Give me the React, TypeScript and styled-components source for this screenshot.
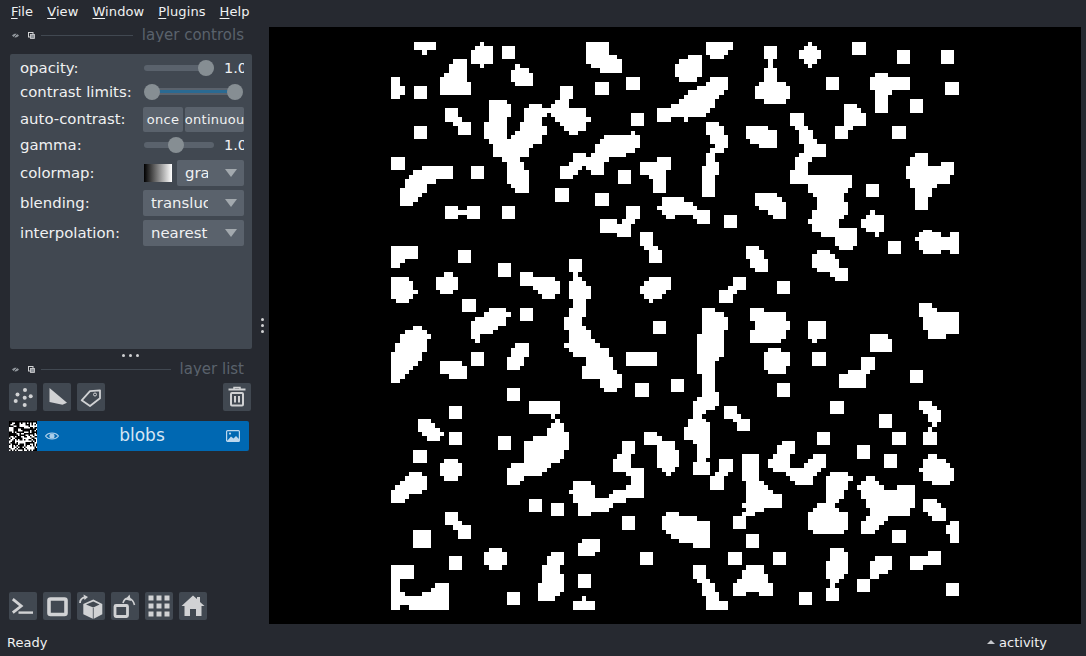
import React from "react";
import styled, { createGlobalStyle } from "styled-components";

const Global = createGlobalStyle`
  html, body { margin: 0; padding: 0; background: #262930; }
  body { font-family: "DejaVu Sans", sans-serif; color: #f0f1f2; }
`;

const Window = styled.div`
  width: 1086px; height: 656px; display: flex; flex-direction: column; overflow: hidden; background: #262930;
`;
const MenuBar = styled.nav`
  height: 27px; flex: none; display: flex; padding-left: 11px; gap: 14px; align-items: flex-start;
`;
const MenuItem = styled.span`
  font-size: 13px; line-height: 23px; color: #f0f1f2; letter-spacing: 0.1px;
  u { text-underline-offset: 2px; text-decoration-thickness: 1px; }
`;
const Main = styled.div`
  flex: none; height: 597px; display: flex;
`;
const Sidebar = styled.aside`
  width: 269px; flex: none; display: flex;
`;
const DockColumn = styled.div`
  width: 254px; flex: none; display: flex; flex-direction: column;
`;
const SplitColumn = styled.div`
  width: 15px; flex: none; display: flex; flex-direction: column; align-items: center; justify-content: center; gap: 3px; padding-left: 2px; box-sizing: border-box; padding-top: 0;
`;
const Dot = styled.i`
  display: block; width: 3px; height: 3px; border-radius: 50%; background: #d1d2d4;
`;
const TitleBar = styled.div<{ $top: number; $bottom: number }>`
  height: 14px; flex: none; display: flex; align-items: center; margin: ${p => p.$top}px 10px ${p => p.$bottom}px 12px;
`;
const TitleIcons = styled.div`
  display: flex; gap: 9px; align-items: center; margin-right: 6px;
`;
const TitleLine = styled.div`
  flex: 1; height: 1px; background: #414851; margin-right: 9px;
`;
const TitleText = styled.div`
  font-size: 15px; line-height: 14px; height: 14px; overflow: hidden; color: #5a626c; white-space: nowrap;
`;
const Panel = styled.section`
  height: 295px; flex: none; margin: 0 2px 0 10px; padding: 4px 0 0 10px; box-sizing: border-box; background: #414851; border-radius: 2px;
`;
const Row = styled.div<{ $h: number }>`
  height: ${p => p.$h}px; display: flex; align-items: center;
`;
const Label = styled.label`
  width: 123px; flex: none; font-size: 14.9px; color: #f0f1f2; white-space: nowrap;
`;
const Control = styled.div`
  width: 101px; flex: none; display: flex; align-items: center; overflow: hidden;
`;
const Slider = styled.div<{ $w: number }>`
  position: relative; margin-left: 1px; width: ${p => p.$w}px; height: 16px; flex: none;
`;
const Track = styled.div`
  position: absolute; left: 0; right: 0; top: 5px; height: 6px; border-radius: 3px; background: #5a626c;
`;
const RangeTrack = styled.div`
  position: absolute; left: 8px; right: 8px; top: 4px; height: 7px; background: #5a626c;
  &::after { content: ""; position: absolute; left: 0; right: 0; top: 2px; height: 3px; background: #2b6a92; }
`;
const Knob = styled.div`
  position: absolute; top: 0; width: 16px; height: 16px; border-radius: 50%; background: #868e93;
`;
const Value = styled.span`
  margin-left: 10px; font-size: 14.5px; color: #f0f1f2; white-space: nowrap; width: 20px; overflow: hidden; flex: none;
`;
const SmallButton = styled.div<{ $w: number; $m: number }>`
  width: ${p => p.$w}px; height: 25px; flex: none; margin-right: ${p => p.$m}px; background: #5a626c; border-radius: 2px;
  display: flex; justify-content: center; align-items: center; overflow: hidden; font-size: 13px; letter-spacing: 0.02em; color: #f0f1f2; white-space: nowrap;
`;
const Swatch = styled.div`
  width: 28px; height: 18px; margin: 0 5px 0 1px; flex: none; background: linear-gradient(90deg, #000, #fff);
`;
const Combo = styled.div<{ $w: number }>`
  width: ${p => p.$w}px; height: 26px; flex: none; background: #5a626c; border-radius: 2px; display: flex; align-items: center; position: relative;
  padding-left: 8px; box-sizing: border-box;
`;
const ComboText = styled.span<{ $w: number }>`
  width: ${p => p.$w}px; overflow: hidden; white-space: nowrap; font-size: 14.9px; color: #f0f1f2;
`;
const Arrow = styled.span`
  position: absolute; right: 7px; top: 9px; width: 0; height: 0;
  border-left: 6px solid transparent; border-right: 6px solid transparent; border-top: 8px solid #a3a9ae;
`;
const Handle = styled.div`
  height: 13px; flex: none; display: flex; justify-content: center; align-items: center; gap: 4px; padding-left: 6px; padding-top: 0;
`;
const ButtonRow = styled.div<{ $top: number }>`
  display: flex; gap: 6px; flex: none; margin: ${p => p.$top}px 3px 0 9px;
`;
const IconButton = styled.button<{ $push?: boolean }>`
  width: 28px; height: 28px; flex: none; padding: 0; border: 0; border-radius: 2px; background: #414851; color: #d1d2d4;
  margin-left: ${p => (p.$push ? "auto" : 0)};
  svg { display: block; }
`;
const LayerRow = styled.div`
  height: 30px; flex: none; margin: 10px 5px 0 9px; display: flex;
`;
const Thumb = styled.svg`
  width: 28px; height: 30px; flex: none; display: block; background: #000;
`;
const LayerBar = styled.div`
  flex: 1; display: flex; align-items: center; background: #0068b2; border-radius: 0 2px 2px 0; position: relative; padding: 0 9px 0 8px;
`;
const LayerName = styled.span`
  flex: 1; text-align: center; font-size: 17px; line-height: 20px; color: #d7e6f2; margin: 0 1px 3px 0;
`;
const BottomRow = styled(ButtonRow)`
  margin-top: auto; margin-bottom: 4px;
`;
const Viewer = styled.main`
  flex: none; width: 812px; height: 597px; background: #000;
`;
const Canvas = styled.svg`
  display: block; width: 812px; height: 597px;
`;
const StatusBar = styled.footer`
  flex: 1; display: flex; align-items: center; justify-content: space-between; padding: 5px 39px 0 7px; font-size: 13px; color: #f0f1f2;
`;
const Activity = styled.div`
  display: flex; align-items: center; gap: 4px;
`;
const Caret = styled.span`
  width: 0; height: 0; border-left: 4px solid transparent; border-right: 4px solid transparent; border-bottom: 4px solid #c5c8cc; margin-top: -1px;
`;

const r = (a: number, b: number, c: number, d: number) => `M${a} ${b}H${c}V${d}H${a}Z`;

const groups: { x: number; y: number; d: string[] }[] = [
  { x: 385, y: 35, d: [
    "M87 20H153V46H125V60H111V46H87Z",
    "M285 20H298V33H325V86H298V100H285V86H258V46H271V33H285Z",
    r(351,33,391,73),
    "M205 73H245V140H258V180H165V126H178V113H191V86H205Z",
    "M18 126H45V153H60V180H45V193H18Z",
    r(87,153,125,193),
    "M391 86H404V100H431V113H444V153H391V140H378V106H391Z",
    "M604 20H671V60H697V73H711V113H644V100H618V86H604Z",
    r(724,126,764,166), r(631,140,671,180), r(738,233,777,273), r(87,273,125,313),
    "M180 220H218V246H231V260H258V300H218V273H205V260H180Z",
    "M311 195H365V207H378V246H365V313H378V300H391V287H404V260H418V220H431V207H471V220H498V207H511V195H525V153H564V193H551V220H604V246H618V260H604V287H578V300H551V287H538V273H524V260H511V246H498V233H485V246H471V273H485V300H471V327H444V340H431V366H404V380H418V406H431V473H391V460H378V446H365V380H351V366H325V327H311V313H298V260H311Z",
    "M658 300H738V287H751V300H765V340H751V353H724V366H671V380H658V420H618V406H604V393H591V406H578V420H564V433H525V393H551V380H564V353H604V366H618V353H631V327H644V313H658Z",
    "M817 220H857V206H871V246H857V260H817Z",
    "M817 366H857V406H844V473H804V433H791V420H765V380H817Z",
    r(18,366,60,406),
    "M111 393H205V433H153V446H125V473H111V486H98V500H85V513H45V460H60V433H71V420H85V406H111Z",
    r(258,393,298,433), r(698,406,738,446), r(511,460,551,500), r(631,473,671,513),
    "M180 513H218V526H245V513H285V553H245V540H218V553H180Z",
    r(351,513,391,553),
    "M831 486H871V553H844V540H831V526H817V513H831Z",
    "M724 513H765V553H751V566H738V605H697V593H644V553H697V566H711V553H724Z",
  ]},
  { x: 675, y: 35, d: [
    "M93 20H173V46H160V60H146V73H106V60H93Z",
    "M40 60H80V126H66V140H13V126H0V86H13V73H40Z",
    r(266,33,306,73),
    "M280 73H293V100H306V140H333V153H346V193H333V206H266V193H240V153H253V140H266V100H280Z",
    "M399 20H412V33H426V46H439V73H426V86H412V100H399V86H386V73H373V46H386V33H399Z",
    r(532,20,573,60), r(666,46,705,86), r(798,46,838,86), r(452,126,492,166),
    "M106 126H159V166H146V180H133V193H120V220H106V233H93V246H40V260H27V246H0V206H13V193H27V180H40V166H66V153H93V140H106Z",
    "M599 113H639V126H705V166H652V180H639V233H599V166H586V126H599Z",
    r(810,140,852,180), r(705,193,745,233),
    "M506 206H546V220H559V233H573V273H533V286H519V313H479V273H506Z",
    r(652,273,692,313),
    "M346 233H386V273H399V286H413V313H426V327H453V366H412V380H399V420H532V460H519V473H506V500H519V540H506V553H492V580H546V632H533V645H493V632H480V605H439V592H412V566H399V553H412V526H426V486H413V473H399V446H346V406H359V366H373V353H386V327H373V286H359V273H346Z",
    "M93 260H133V273H146V300H160V340H146V353H120V380H133V420H120V486H80V393H93V353H106V340H120V327H106V300H93Z",
    "M213 273H280V286H306V340H253V327H226V313H213Z",
    r(146,540,186,580),
    "M0 486H27V500H53V513H66V526H106V566H66V553H53V540H0Z",
    "M240 473H306V486H320V500H333V553H293V540H280V526H253V513H240Z",
    "M719 353H759V393H799V380H838V420H825V446H785V460H772V486H759V526H719V460H705V433H692V393H705V366H719Z",
    r(573,446,612,486),
    "M586 526H599V540H626V592H612V605H599V592H573V580H559V553H573V540H586Z",
  ]},
  { x: 385, y: 230, d: [
    "M18 47H98V87H60V100H45V113H18Z",
    r(219,60,258,100), r(338,100,378,140),
    "M405 127H444V140H511V153H525V193H511V207H471V193H458V180H444V167H405Z",
    "M551 87H591V127H578V140H591V153H604V167H618V207H604V260H591V287H604V300H618V327H631V340H644V353H671V380H684V420H697V433H711V473H697V487H658V473H644V447H591V407H604V380H564V367H551V353H538V340H551V300H538V260H551V233H564V207H551V153H564V127H551Z",
    "M765 7H804V47H818V60H831V100H791V60H778V47H765Z",
    "M791 140H857V180H844V193H831V207H804V220H791V207H778V193H765V167H778V153H791Z",
    "M165 140H178V127H205V140H218V180H205V193H165V180H153V140Z",
    "M18 140H71V153H85V180H98V193H85V207H71V220H33V207H18Z",
    r(231,207,273,247),
    "M311 233H364V247H378V260H364V287H338V300H325V313H285V340H271V327H258V273H271V260H298V247H311Z",
    r(405,233,444,273), r(804,273,844,313),
    "M85 287H111V300H125V313H138V327H125V367H111V393H98V407H85V420H71V433H60V447H45V460H18V367H31V340H45V313H60V300H85Z",
    "M391 340H431V380H418V407H404V420H365V380H378V353H391Z",
    r(258,367,298,407),
    "M165 393H231V407H245V447H191V433H165Z",
    r(724,367,817,407), r(365,473,405,513), r(751,460,791,500), r(858,447,898,487),
    r(191,527,231,567),
    "M431 513H525V553H511V567H498V553H431Z",
  ]},
  { x: 675, y: 230, d: [
    "M213 47H253V60H266V87H280V127H240V113H226V87H213Z",
    "M426 60H466V73H479V87H493V113H519V153H479V140H466V127H426V113H412V73H426Z",
    r(639,33,679,73),
    "M745 0H772V7H799V20H825V7H852V73H825V60H799V73H745V60H732V33H719V20H732V7H745Z",
    "M173 140H213V180H186V193H173V220H133V180H160V167H173Z",
    r(306,153,346,193),
    "M80 233H120V247H146V260H160V300H146V380H133V393H120V487H133V527H120V540H93V553H80V567H93V577H106V684H93V697H106V736H53V697H66V643H53V630H27V590H40V567H53V513H66V500H80V433H66V313H80Z",
    "M225 233H266V247H333V273H346V300H333V327H319V340H225V300H240V273H225Z",
    "M732 220H772V233H785V247H852V313H812V327H759V300H745V260H732Z",
    "M399 273H453V327H426V340H412V327H399Z",
    "M586 313H639V327H652V367H586Z",
    "M280 353H319V367H346V407H333V433H280V420H266V367H280Z",
    r(412,367,453,407),
    "M559 380H599V420H586V433H573V473H493V433H519V420H559Z",
    r(705,420,745,460), r(306,460,346,500), r(466,513,506,553),
    "M732 513H772V527H785V540H799V577H785V590H772V577H759V553H745V540H732Z",
    "M146 527H186V553H199V567H226V603H186V577H173V567H146Z",
    r(612,553,652,593),
  ]},
  { x: 385, y: 420, d: [
    "M98 -4H138V9H151V23H165V36H178V49H165V63H125V49H111V36H98Z",
    r(191,36,231,76), r(338,49,378,89),
    "M511 -4H525V9H538V36H551V89H538V116H525V129H498V143H485V156H471V169H418V183H404V196H365V143H378V129H418V63H444V49H485V23H498V9H511Z",
    r(85,89,125,129),
    "M178 116H218V129H231V169H218V183H178V169H165V129H178Z",
    "M71 156H111V169H125V209H111V223H71V236H60V249H18V209H31V196H45V183H60V169H71Z",
    "M711 63H751V103H738V143H778V233H724V249H684V263H671V276H618V289H578V249H564V223H551V209H564V183H618V196H631V233H671V223H684V209H724V196H738V169H724V156H684V116H697V103H711Z",
    r(431,236,471,276), r(498,249,538,289), r(711,289,751,329),
    "M180 276H218V303H231V316H258V356H218V329H205V316H180Z",
    r(85,329,138,383),
    "M311 383H351V396H365V436H351V449H311V436H298V396H311Z",
    "M591 356H644V396H631V409H578V369H591Z",
    r(191,409,231,449), r(765,396,804,436),
    "M498 396H538V436H525V463H538V516H525V529H511V543H458V489H471V436H485V409H498Z",
    r(578,463,618,503),
    "M18 436H87V476H45V516H60V529H111V516H138V503H151V489H191V569H71V556H45V569H18Z",
    r(365,516,405,556),
    "M591 529H604V543H631V569H564V543H591Z",
    "M778 36H817V49H831V63H870V89H883V140H870V156H857V169H844V156H831V143H817V76H778Z",
    "M844 276H871V356H857V343H844V329H831V289H844Z",
  ]},
  { x: 675, y: 420, d: [
    r(426,36,466,76), r(652,36,692,76),
    r(745,36,785,76), r(759,20,772,36), r(759,0,799,7), r(772,7,785,20),
    r(546,76,586,116), r(626,103,666,143),
    "M759 103H785V116H812V129H825V143H838V183H825V196H772V183H745V156H732V143H745V116H759Z",
    "M320 63H359V103H346V143H386V129H399V116H413V103H453V143H439V156H426V169H413V196H359V183H346V169H333V156H293V143H280V116H293V103H306V76H320Z",
    "M133 116H173V156H160V169H146V209H106V169H120V156H133Z",
    "M200 103H253V183H266V196H280V209H293V223H320V263H266V276H240V289H213V327H173V289H200V276H213V263H200V249H213V183H200Z",
    "M466 156H519V169H533V183H519V209H506V236H493V249H479V263H493V276H519V329H506V343H413V329H399V276H413V263H426V249H453V169H466Z",
    "M573 169H599V183H612V196H626V209H666V196H719V263H705V289H639V303H626V316H612V329H599V343H559V303H573V289H586V263H573V236H559V209H546V196H559V183H573Z",
    r(213,343,253,383),
    "M745 236H785V249H799V263H812V303H772V289H759V276H745Z",
    "M839 303H852V369H825V343H812V316H825V303Z",
    r(652,329,692,369), r(160,396,200,436), r(293,396,333,436),
    "M466 383H506V396H519V463H506V476H493V489H479V503H493V543H453V503H466V476H453V423H466Z",
    "M599 409H652V449H639V463H612V476H586V423H599Z",
    r(546,476,586,516),
    "M759 393H799V436H745V449H705V409H759Z",
    r(812,489,852,529), r(372,516,412,556),
    "M0 276H13V289H66V303H106V383H53V369H13V356H0Z",
    "M53 436H93V476H106V489H120V516H133V543H160V569H93V529H80V489H66V476H53Z",
    "M213 436H266V463H280V489H293V529H253V516H213V529H173V489H186V476H200V449H213Z",
  ]},
];

const thumbCells = (() => {
  const out: string[] = [];
  let s = 12345;
  for (let y = 1.5; y < 29; y += 1.5) {
    for (let x = 0; x < 27.5; x += 1.5) {
      s = (s * 1103515245 + 12345) & 0x7fffffff;
      if ((s >> 16) % 100 < 50) out.push(`M${x} ${y}h1.5v1.5h-1.5z`);
    }
  }
  return out.join("");
})();

const Svg = ({ children, w = 28, h = 28 }: { children: React.ReactNode; w?: number; h?: number }) => (
  <svg width={w} height={h} viewBox={`0 0 ${w} ${h}`} fill="none">{children}</svg>
);
const C = "#d1d2d4";

const PointsIcon = () => (
  <Svg>
    {[[16, 7], [21.7, 13.3], [8.5, 11.5], [6.7, 18], [15.7, 14.7], [15.7, 22]].map(([x, y], i) => (
      <circle key={i} cx={x} cy={y} r={2} fill={C} />
    ))}
  </Svg>
);
const ShapesIcon = () => (
  <Svg><path d="M6.5 5L24 19.7L19.5 21.8L6.5 19Z" fill={C} /></Svg>
);
const LabelsIcon = () => (
  <Svg>
    <path d="M4.7 17.3L13 8.2L23 7.3V15.3L13 23Z" stroke={C} strokeWidth={1.8} strokeLinejoin="round" />
    <circle cx={18} cy={11.5} r={1.5} stroke={C} strokeWidth={1} />
  </Svg>
);
const TrashIcon = () => (
  <Svg>
    <path d="M5.5 6.5H22.5" stroke={C} strokeWidth={2} />
    <path d="M11 6V4.5H17V6" stroke={C} strokeWidth={1.5} />
    <rect x={8} y={10} width={12} height={12.5} rx={1} stroke={C} strokeWidth={2} />
    <path d="M12 13V19.5M16 13V19.5" stroke={C} strokeWidth={2} />
  </Svg>
);
const ConsoleIcon = () => (
  <Svg>
    <path d="M3.8 7.2L12.2 14L3.8 20.6" stroke={C} strokeWidth={2.8} />
    <path d="M9.5 20.6H24" stroke={C} strokeWidth={2.4} />
  </Svg>
);
const SquareIcon = () => (
  <Svg><rect x={6} y={7} width={17} height={15.5} rx={1.5} stroke={C} strokeWidth={3.6} /></Svg>
);
const CubeIcon = () => (
  <Svg>
    <path d="M16.3 7.5L25.3 12V22.3L16.3 27L6.3 22.3V12Z" fill={C} />
    <path d="M16.3 9.6L22.6 12.5L16.3 15.6L9 12.5Z" fill="#414851" />
    <path d="M16.3 16V27" stroke="#414851" strokeWidth={0.8} />
    <path d="M3 11C3 8 5 6 8 5.2" stroke={C} strokeWidth={1.8} />
    <path d="M6.5 2.5L11 5L7.5 8Z" fill={C} />
  </Svg>
);
const RollIcon = () => (
  <Svg>
    <rect x={4} y={13.5} width={12.5} height={11} rx={1} stroke={C} strokeWidth={2.8} />
    <path d="M12 11C13 7.5 15 6 18 6.5C20.5 7 22.5 9 23.5 13" stroke={C} strokeWidth={1.6} />
    <path d="M18.5 2.5L20 9L14.5 7.5Z" fill={C} />
  </Svg>
);
const GridIcon = () => (
  <Svg>
    {[3.5, 11.5, 19.5].flatMap(y => [3.5, 11.5, 19.5].map(x => <rect key={`${x}-${y}`} x={x} y={y} width={5} height={5} fill={C} />))}
  </Svg>
);
const HomeIcon = () => (
  <Svg><path d="M14 3.5L18 7V5H21V10L25.5 14H22.5V24H17V17H11V24H5.5V14H2.5Z" fill={C} /></Svg>
);
const MiniEye = () => (
  <Svg w={7} h={7}>
    <path d="M0 3.5C2 1 5 1 7 3.5C5 6 2 6 0 3.5Z" fill="#8f949a" />
    <path d="M1 6L6 1" stroke="#262930" strokeWidth={0.8} />
  </Svg>
);
const MiniFloat = () => (
  <Svg w={7} h={7}>
    <rect x={0.5} y={0.5} width={4.5} height={4.5} stroke={C} strokeWidth={1} />
    <rect x={2.5} y={2.5} width={4} height={4} fill="#8f949a" stroke={C} strokeWidth={0.8} />
  </Svg>
);
const EyeIcon = () => (
  <Svg w={14} h={10}>
    <path d="M0.5 5C3.5 1 10.5 1 13.5 5C10.5 9 3.5 9 0.5 5Z" stroke="#a9cde9" strokeWidth={1.2} />
    <circle cx={7} cy={5} r={2.6} fill="#a9cde9" />
  </Svg>
);
const ImageIcon = () => (
  <Svg w={14} h={12}>
    <rect x={0.6} y={0.6} width={12.8} height={10.8} rx={1} stroke="#bcd7ed" strokeWidth={1.2} />
    <path d="M1 11L5 6.5L7.5 8.5L10 6L13 9V11.5H1Z" fill="#bcd7ed" />
    <circle cx={4} cy={3.6} r={1.1} fill="#bcd7ed" />
  </Svg>
);

const Title = ({ text, top, bottom }: { text: string; top: number; bottom: number }) => (
  <TitleBar $top={top} $bottom={bottom}>
    <TitleIcons><MiniEye /><MiniFloat /></TitleIcons>
    <TitleLine />
    <TitleText>{text}</TitleText>
  </TitleBar>
);

const menus = [["F", "ile"], ["V", "iew"], ["W", "indow"], ["P", "lugins"], ["H", "elp"]];

export default function App() {
  return (
    <Window>
      <Global />
      <MenuBar>
        {menus.map(([a, b]) => <MenuItem key={a}><u>{a}</u>{b}</MenuItem>)}
      </MenuBar>
      <Main>
        <Sidebar>
          <DockColumn>
            <Title text="layer controls" top={1} bottom={12} />
            <Panel>
              <Row $h={20}>
                <Label>opacity:</Label>
                <Control>
                  <Slider $w={70}><Track /><Knob style={{ left: 54 }} /></Slider>
                  <Value>1.00</Value>
                </Control>
              </Row>
              <Row $h={28}>
                <Label>contrast limits:</Label>
                <Control>
                  <Slider $w={99}>
                    <RangeTrack />
                    <Knob style={{ left: 0 }} />
                    <Knob style={{ left: 83 }} />
                  </Slider>
                </Control>
              </Row>
              <Row $h={26}>
                <Label>auto-contrast:</Label>
                <Control>
                  <SmallButton $w={40} $m={2}>once</SmallButton>
                  <SmallButton $w={59} $m={0}>continuous</SmallButton>
                </Control>
              </Row>
              <Row $h={26}>
                <Label>gamma:</Label>
                <Control>
                  <Slider $w={70}><Track /><Knob style={{ left: 24 }} /></Slider>
                  <Value>1.00</Value>
                </Control>
              </Row>
              <Row $h={30}>
                <Label>colormap:</Label>
                <Control>
                  <Swatch />
                  <Combo $w={67}><ComboText $w={23}>gray</ComboText><Arrow /></Combo>
                </Control>
              </Row>
              <Row $h={30}>
                <Label>blending:</Label>
                <Control>
                  <Combo $w={101}><ComboText $w={57}>translucent</ComboText><Arrow /></Combo>
                </Control>
              </Row>
              <Row $h={30}>
                <Label>interpolation:</Label>
                <Control>
                  <Combo $w={101}><ComboText $w={57}>nearest</ComboText><Arrow /></Combo>
                </Control>
              </Row>
            </Panel>
            <Handle><Dot /><Dot /><Dot /></Handle>
            <Title text="layer list" top={0} bottom={0} />
            <ButtonRow $top={7}>
              <IconButton><PointsIcon /></IconButton>
              <IconButton><ShapesIcon /></IconButton>
              <IconButton><LabelsIcon /></IconButton>
              <IconButton $push><TrashIcon /></IconButton>
            </ButtonRow>
            <LayerRow>
              <Thumb viewBox="0 0 28 30"><path d={thumbCells} fill="#fff" /></Thumb>
              <LayerBar>
                <EyeIcon />
                <LayerName>blobs</LayerName>
                <ImageIcon />
              </LayerBar>
            </LayerRow>
            <BottomRow $top={0}>
              <IconButton><ConsoleIcon /></IconButton>
              <IconButton><SquareIcon /></IconButton>
              <IconButton><CubeIcon /></IconButton>
              <IconButton><RollIcon /></IconButton>
              <IconButton><GridIcon /></IconButton>
              <IconButton><HomeIcon /></IconButton>
            </BottomRow>
          </DockColumn>
          <SplitColumn><Dot /><Dot /><Dot /></SplitColumn>
        </Sidebar>
        <Viewer>
          <Canvas viewBox="0 0 812 597">
            {groups.map(g => (
              <g key={`${g.x}-${g.y}`} transform={`translate(${g.x - 269} ${g.y - 27}) scale(${1 / 3})`} fill="#fff" shapeRendering="crispEdges">
                {g.d.map((d, i) => <path key={i} d={d} />)}
              </g>
            ))}
          </Canvas>
        </Viewer>
      </Main>
      <StatusBar>
        <span>Ready</span>
        <Activity><Caret />activity</Activity>
      </StatusBar>
    </Window>
  );
}
